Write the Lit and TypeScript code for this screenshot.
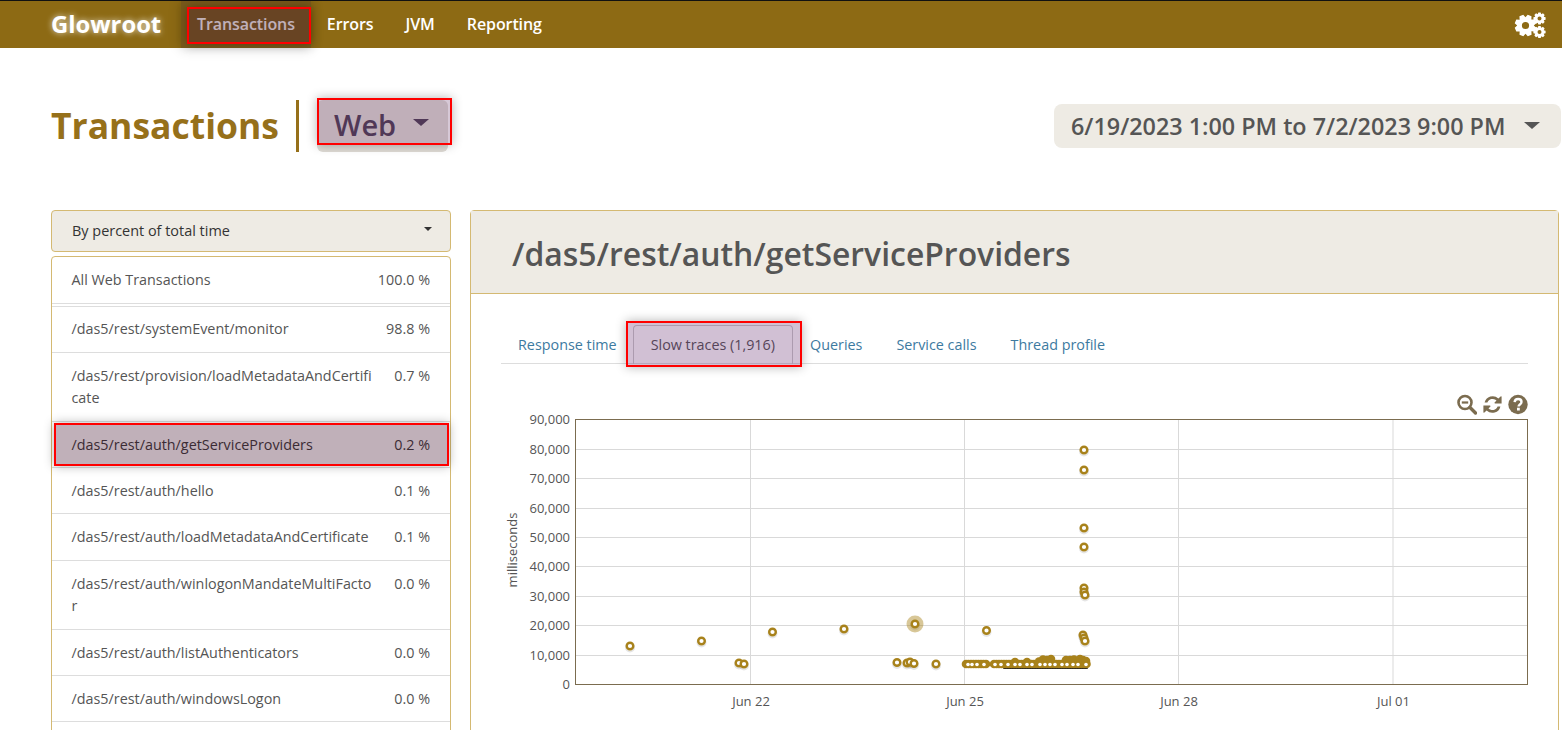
import { LitElement, html, css, svg } from "lit";
import { customElement } from "lit/decorators.js";

const GOLD = "#a8821b";
const ICON = "#7b6c4f";

const rows = [
  { name: "/das5/rest/systemEvent/monitor", pct: "98.8 %" },
  { name: "/das5/rest/provision/loadMetadataAndCertificate", pct: "0.7 %" },
  { name: "/das5/rest/auth/getServiceProviders", pct: "0.2 %", active: true },
  { name: "/das5/rest/auth/hello", pct: "0.1 %" },
  { name: "/das5/rest/auth/loadMetadataAndCertificate", pct: "0.1 %" },
  { name: "/das5/rest/auth/winlogonMandateMultiFactor", pct: "0.0 %" },
  { name: "/das5/rest/auth/listAuthenticators", pct: "0.0 %" },
  { name: "/das5/rest/auth/windowsLogon", pct: "0.0 %" },
];

const yTicks = [0, 1, 2, 3, 4, 5, 6, 7, 8, 9];
const xTicks = [
  { x: 750.5, label: "Jun 22" },
  { x: 964.5, label: "Jun 25" },
  { x: 1178.5, label: "Jun 28" },
  { x: 1393, label: "Jul 01" },
];

const points: number[][] = [
  [630, 646], [701.5, 641], [739, 663], [744, 664], [772.5, 632], [844, 629],
  [897, 662.5], [907, 663], [910, 662], [914, 663.5], [915, 624], [936, 664], [986.5, 630.5],
  [1084, 450], [1084, 470], [1084, 528], [1084, 547], [1084, 588], [1084, 592], [1085, 595],
  [1083, 635], [1084, 638], [1085, 641],
];

// the dense band of traces along 7,000 ms, drawn solid with holes punched back in
const cluster: number[][] = [];
for (let x = 966; x <= 986; x += 2.5) cluster.push([x, 664]);
for (let x = 994; x <= 1087; x += 2.5) cluster.push([x, 664]);
cluster.push([1015, 662], [1027, 662], [1039, 661.5], [1043, 659.5], [1047, 660], [1051, 659], [1066, 660], [1070, 660], [1074, 659.5], [1080, 659], [1083, 660], [1086, 661]);
const holes = [968, 972, 977, 984, 995, 1001, 1008, 1015, 1020, 1027, 1032, 1040, 1045, 1050, 1055, 1062, 1067, 1073, 1078, 1086];

function gear(cx: number, cy: number, ro: number, ri: number, hole: number, teeth: number, rot = 0) {
  let d = "";
  const step = (Math.PI * 2) / teeth;
  for (let t = 0; t < teeth; t++) {
    const a = t * step + rot;
    const pts: [number, number][] = [
      [ri, a - step * 0.5],
      [ro, a - step * 0.24],
      [ro, a + step * 0.24],
    ];
    for (const [r, an] of pts) {
      d += `${d ? "L" : "M"}${(cx + r * Math.cos(an)).toFixed(2)} ${(cy + r * Math.sin(an)).toFixed(2)}`;
    }
  }
  d += `ZM${cx + hole} ${cy}A${hole} ${hole} 0 1 0 ${cx - hole} ${cy}A${hole} ${hole} 0 1 0 ${cx + hole} ${cy}Z`;
  return d;
}

@customElement("app-root")
export class AppRoot extends LitElement {
  static styles = css`
    :host {
      display: block;
      height: 730px;
      overflow: hidden;
      background: #fff;
      font-family: "Open Sans", "Noto Sans", sans-serif;
      font-size: 14.35px;
      color: #555;
    }
    .mark {
      position: relative;
    }
    .mark::after {
      content: "";
      position: absolute;
      border: 2px solid #f00;
      background: var(--tint, rgba(75, 29, 55, 0.35));
      box-shadow: 0 0 10px rgba(0, 0, 0, 0.3);
      pointer-events: none;
    }
    .nav {
      box-sizing: border-box;
      height: 48px;
      border-top: 1px solid #111;
      background: #8d6a14;
      display: flex;
      align-items: stretch;
      padding-left: 51px;
    }
    .logo {
      font-size: 23.8px;
      font-weight: 700;
      color: #fff;
      line-height: 46px;
      width: 130px;
      text-shadow: 0 0 6px rgba(255, 255, 255, 0.8);
    }
    .nav a {
      padding: 0 16px;
      line-height: 47px;
      font-size: 16px;
      font-weight: 600;
      letter-spacing: -0.09px;
      color: #fff;
    }
    .nav a.on {
      background: #78591a;
      box-shadow: 0 0 12px rgba(0, 0, 0, 0.2);
    }
    .nav a.on::after {
      left: 6px;
      right: 0;
      top: 6px;
      bottom: 4px;
    }
    .cogs {
      margin-left: auto;
      margin-right: 16px;
      align-self: center;
      display: block;
    }
    .head {
      display: flex;
      align-items: flex-start;
      padding: 52px 1px 0 51px;
      height: 52px;
      margin-bottom: 58px;
    }
    h1 {
      margin: 0;
      font-size: 35.5px;
      font-weight: 700;
      line-height: 50px;
      color: #96701a;
      padding-right: 17px;
    }
    .bar {
      width: 3px;
      height: 52px;
      background: #96701a;
    }
    .web {
      margin-left: 18px;
      width: 131px;
      height: 52px;
      box-sizing: border-box;
      padding: 0 17px;
      border-radius: 6px;
      background: #dedad4;
      display: flex;
      align-items: flex-start;
      font-size: 29px;
      font-weight: 600;
      line-height: 50px;
      color: #3e3048;
      --tint: rgba(122, 75, 122, 0.3);
    }
    .web::after {
      left: 0;
      right: -4px;
      top: -2px;
      bottom: 7px;
    }
    .web i {
      margin: 19px 0 0 17px;
    }
    i.caret {
      display: block;
      width: 0;
      height: 0;
      border-style: solid;
      border-color: currentColor transparent transparent;
      border-width: 7px 8px 0;
    }
    .date {
      margin: 4px 0 0 auto;
      width: 507px;
      height: 44px;
      box-sizing: border-box;
      padding-left: 17px;
      border-radius: 8px;
      background: #eeebe4;
      display: flex;
      font-size: 23.35px;
      font-weight: 600;
      line-height: 45px;
      white-space: nowrap;
    }
    .date i {
      margin: 18px 0 0 19px;
    }
    .main {
      display: flex;
      align-items: flex-start;
      gap: 19px;
      padding-left: 51px;
    }
    .side {
      width: 400px;
      flex: none;
    }
    .sort {
      box-sizing: border-box;
      height: 42px;
      border: 1px solid #d4b972;
      border-radius: 4px;
      background: #eeebe4;
      padding-left: 20px;
      display: flex;
      justify-content: space-between;
      font-size: 14.45px;
      color: #333;
      line-height: 39px;
    }
    .sort i {
      border-width: 4px 4px 0;
      margin: 16px 18px 0 0;
    }
    .list {
      margin-top: 4px;
      border: 1px solid #d4b972;
      border-radius: 4px;
      background: #fff;
    }
    .row {
      display: flex;
      justify-content: space-between;
      gap: 18px;
      padding: 12px 20px 11px 19.5px;
      line-height: 22.4px;
      border-bottom: 1px solid #ddd;
    }
    .row.all {
      padding-bottom: 12px;
      margin-bottom: 2px;
      box-shadow: 0 2px 0 #fff, 0 3px 0 #ddd;
    }
    .row .name {
      width: 302px;
      word-break: break-all;
    }
    .row .pct {
      white-space: nowrap;
    }
    .row.on {
      color: #333;
    }
    .row.on::after {
      left: 2px;
      right: 1px;
      top: 1px;
      bottom: 1px;
    }
    /* the list runs on below the window */
    .more {
      height: 46px;
    }
    .panel {
      width: 1089px;
      flex: none;
      box-sizing: border-box;
      height: 560px;
      border: 1px solid #d4b972;
      border-radius: 4px;
    }
    .panel h2 {
      margin: 0;
      box-sizing: border-box;
      height: 83px;
      padding-left: 41px;
      background: #eeebe4;
      border-bottom: 1px solid #d4b972;
      font-size: 31.9px;
      font-weight: 600;
      line-height: 85px;
      color: #555;
    }
    .body {
      padding: 31px 30px 0;
    }
    .tabs {
      display: flex;
      height: 39px;
      box-sizing: border-box;
      border-bottom: 1px solid #ddd;
    }
    .tab {
      padding: 0 17px;
      font-size: 14.35px;
      line-height: 39px;
      color: #3d7a9f;
      white-space: nowrap;
    }
    .tab.on {
      box-sizing: border-box;
      height: 39px;
      margin-left: -1px;
      border: 1px solid #ccc;
      border-bottom: 0;
      border-radius: 4px 4px 0 0;
      color: #555;
      line-height: 37px;
      --tint: rgba(88, 30, 100, 0.28);
    }
    .tab.on::after {
      left: -8px;
      right: -10px;
      top: -5px;
      bottom: -3px;
    }
    .tools {
      display: flex;
      justify-content: flex-end;
      gap: 5px;
      margin-top: 30px;
      height: 16px;
    }
    .tools svg {
      display: block;
      flex: none;
    }
    .chart {
      display: block;
      width: 1030px;
      height: 325px;
    }
    .chart text {
      font-family: "Open Sans", "Noto Sans", sans-serif;
      font-size: 13px;
      fill: #555;
    }
  `;

  renderChart() {
    return html`<svg class="chart" viewBox="501 410 1030 325">
      ${yTicks.map((i) => {
        const y = Math.round(684 - 29.4 * i) + 0.5;
        return svg`
          ${i > 0 && i < 9 ? svg`<line x1="575" x2="1528" y1=${y} y2=${y} stroke="#d9d9d9"></line>` : ""}
          <text x="570" y=${y + 4.5} text-anchor="end">${i === 0 ? "0" : `${i * 10},000`}</text>`;
      })}
      ${xTicks.map(
        (t) => svg`
          <line x1=${t.x} x2=${t.x} y1="420" y2="684" stroke="#d9d9d9"></line>
          <text x=${t.x + 0.5} y="705.5" text-anchor="middle">${t.label}</text>`,
      )}
      <rect x="575.5" y="419.5" width="952" height="265" fill="none" stroke="#7b6c4f"></rect>
      <text transform="translate(517 550) rotate(-90)" text-anchor="middle">milliseconds</text>
      ${points.map(
        ([x, y]) => svg`<circle cx=${x} cy=${y + 1.5} r="4" fill="none" stroke="#000" stroke-opacity="0.1" stroke-width="2"></circle>`,
      )}
      <line x1="1004" x2="1087" y1="668" y2="668" stroke="#222" stroke-width="2" stroke-linecap="round"></line>
      <circle cx="915" cy="624" r="8.500" fill=${GOLD} fill-opacity="0.45"></circle>
      ${cluster.map(([x, y]) => svg`<circle cx=${x} cy=${y} r="4.300" fill=${GOLD}></circle>`)}
      ${holes.map((x) => svg`<circle cx=${x} cy="664.500" r="1.800" fill="#fff"></circle>`)}
      ${points.map(
        ([x, y]) => svg`<circle cx=${x} cy=${y} r="3.300" fill="#fff" stroke=${GOLD} stroke-width="2.400"></circle>`,
      )}
    </svg>`;
  }

  render() {
    return html`
      <div class="nav">
        <div class="logo">Glowroot</div>
        <a class="on mark">Transactions</a>
        <a>Errors</a>
        <a>JVM</a>
        <a>Reporting</a>
        <svg class="cogs" width="32" height="26" viewBox="0 0 32 26">
          <path fill="#fff" fill-rule="evenodd" d=${gear(11.5, 13.5, 11, 8.3, 3.6, 8, 0.39)}></path>
          <path fill="#fff" fill-rule="evenodd" d=${gear(25.5, 6.5, 6.2, 4.6, 2, 8)}></path>
          <path fill="#fff" fill-rule="evenodd" d=${gear(25.5, 20, 6.2, 4.6, 2, 8)}></path>
        </svg>
      </div>

      <div class="head">
        <h1>Transactions</h1>
        <div class="bar"></div>
        <div class="web mark">Web <i class="caret"></i></div>
        <div class="date">6/19/2023 1:00 PM to 7/2/2023 9:00 PM <i class="caret"></i></div>
      </div>

      <div class="main">
        <div class="side">
          <div class="sort">By percent of total time <i class="caret"></i></div>
          <div class="list">
            <div class="row all">
              <span class="name">All Web Transactions</span><span class="pct">100.0 %</span>
            </div>
            ${rows.map(
              (r) => html`<div class="row ${r.active ? "on mark" : ""}">
                <span class="name">${r.name}</span><span class="pct">${r.pct}</span>
              </div>`,
            )}
            <div class="more"></div>
          </div>
        </div>

        <div class="panel">
          <h2>/das5/rest/auth/getServiceProviders</h2>
          <div class="body">
            <div class="tabs">
              <div class="tab">Response time</div>
              <div class="tab on mark">Slow traces (1,916)</div>
              <div class="tab">Queries</div>
              <div class="tab">Service calls</div>
              <div class="tab">Thread profile</div>
            </div>
            <div class="tools">
              <svg width="20" height="21" viewBox="0 0 20 21" fill="none" stroke=${ICON}>
                <circle cx="8" cy="8.5" r="6.5" stroke-width="2.6"></circle>
                <path d="M4.8 8.5h6.4" stroke-width="2.2"></path>
                <path d="M13 13.5l5.5 5.5" stroke-width="3.4" stroke-linecap="round"></path>
              </svg>
              <svg width="21" height="21" viewBox="0 0 21 21" fill=${ICON}>
                <path d="M2.6 8.6A8.2 8.2 0 0 1 16.4 4.6L18.6 2.4a.6.6 0 0 1 1 .4V9.4H13a.6.6 0 0 1-.4-1L14.5 6.500A5.600 5.600 0 0 0 5.400 8.600Z"></path>
                <path d="M18.400 12.400A8.200 8.200 0 0 1 4.600 16.400L2.400 18.600a.6.6 0 0 1-1-.4V11.600H8a.6.6 0 0 1 .4 1L6.500 14.500A5.600 5.600 0 0 0 15.600 12.400Z"></path>
              </svg>
              <svg width="20" height="21" viewBox="0 0 20 21">
                <circle cx="10" cy="10.500" r="9.700" fill=${ICON}></circle>
                <path d="M6.600 8.200C6.800 6 8.300 5 10.100 5c1.900 0 3.400 1.200 3.400 3 0 2.500-2.900 2.500-2.900 4.400" fill="none" stroke="#fff" stroke-width="2.400"></path>
                <rect x="9" y="13.700" width="2.800" height="2.800" fill="#fff"></rect>
              </svg>
            </div>
            ${this.renderChart()}
          </div>
        </div>
      </div>
    `;
  }
}
